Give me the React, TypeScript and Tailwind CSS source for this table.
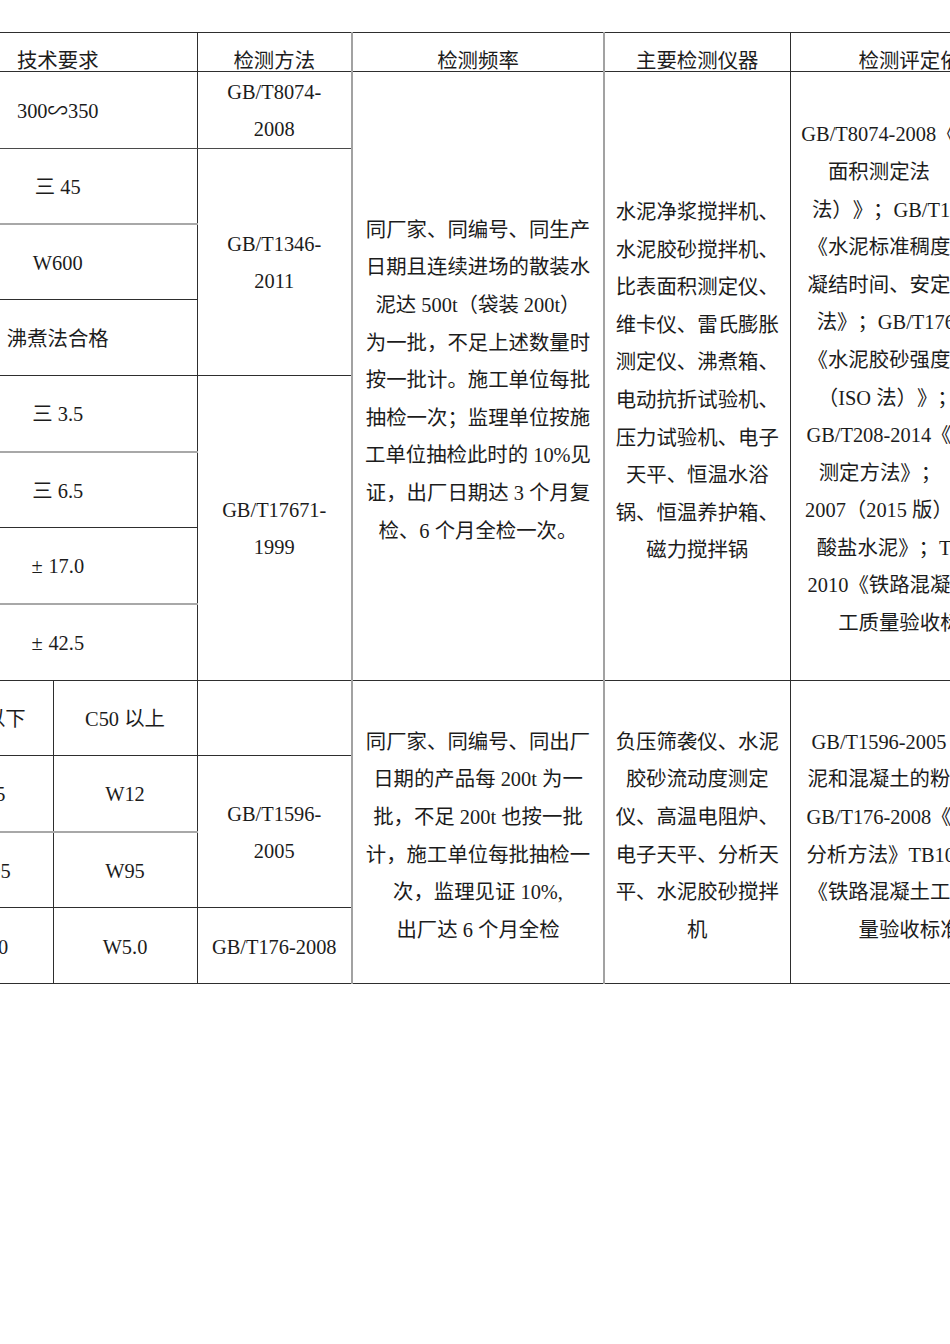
import React from 'react';

// 水泥 / 粉煤灰 检测项目表（页面左右被裁切）

const upperFreq = [
  '同厂家、同编号、同生产',
  '日期且连续进场的散装水',
  '泥达 500t（袋装 200t）',
  '为一批，不足上述数量时',
  '按一批计。施工单位每批',
  '抽检一次；监理单位按施',
  '工单位抽检此时的 10%见',
  '证，出厂日期达 3 个月复',
  '检、6 个月全检一次。',
];

const upperInst = [
  '水泥净浆搅拌机、',
  '水泥胶砂搅拌机、',
  '比表面积测定仪、',
  '维卡仪、雷氏膨胀',
  '测定仪、沸煮箱、',
  '电动抗折试验机、',
  '压力试验机、电子',
  '天平、恒温水浴',
  '锅、恒温养护箱、',
  '磁力搅拌锅',
];

const upperStd: React.ReactNode[] = [
  'GB/T8074-2008《水泥比表',
  '面积测定法　（勃氏',
  '法）》；GB/T1346-2011',
  '《水泥标准稠度用水量、',
  '凝结时间、安定性检验方',
  '法》；GB/T17671-1999',
  '《水泥胶砂强度检验方法',
  <>（ISO 法）》；<span className="inline-block w-[64px]" /></>,
  'GB/T208-2014《水泥密度',
  <>测定方法》；<span className="inline-block w-[14px]" />GB175-</>,
  '2007（2015 版）《通用硅',
  '酸盐水泥》；TB10424-',
  '2010《铁路混凝土工程施',
  '工质量验收标准》',
];

const lowerFreq = [
  '同厂家、同编号、同出厂',
  '日期的产品每 200t 为一',
  '批，不足 200t 也按一批',
  '计，施工单位每批抽检一',
  '次，监理见证 10%,',
  '出厂达 6 个月全检',
];

const lowerInst = [
  '负压筛袭仪、水泥',
  '胶砂流动度测定',
  '仪、高温电阻炉、',
  '电子天平、分析天',
  '平、水泥胶砂搅拌',
  '机',
];

const lowerStd = [
  'GB/T1596-2005《用于水',
  '泥和混凝土的粉煤灰》；',
  'GB/T176-2008《水泥化学',
  '分析方法》TB10424-2010',
  '《铁路混凝土工程施工质',
  '量验收标准》',
];

function Lines({ lines, className = '' }: { lines: React.ReactNode[]; className?: string }) {
  return (
    <div className={`flex flex-col items-center leading-[37.6px] ${className}`}>
      {lines.map((l, i) => (
        <span key={i} className="whitespace-pre">{l}</span>
      ))}
    </div>
  );
}

const R_DARK = 'border-r border-r-[#2e2e2e]';
const R_GRAY = 'border-r-2 border-r-[#a2a2a2]';
const B_DARK = 'border-b border-b-[#2e2e2e]';
const B_GRAY = 'border-b-2 border-b-[#a8a8a8]';

function Single({ text, className = '', span = 1 }: { text: React.ReactNode; className?: string; span?: number }) {
  return (
    <td colSpan={span} className={`p-0 align-middle ${className}`}>
      <div className="flex justify-center pt-[3px] whitespace-pre">{text}</div>
    </td>
  );
}

// full-width ± like the original document font
const PM = () => <span className="inline-block w-[17px] text-left">±</span>;

export default function App() {
  return (
    <div className="w-[950px] h-[1344px] overflow-hidden bg-white">
      <table className="ml-[-81px] mt-[32px] w-[1130px] table-fixed border-collapse text-[20.4px] text-[#1c1c1c] [text-spacing-trim:space-all] font-['Liberation_Serif','Noto_Sans_CJK_SC',serif]">
        <colgroup>
          <col className="w-[134px]" />
          <col className="w-[144px]" />
          <col className="w-[155px]" />
          <col className="w-[252px]" />
          <col className="w-[186px]" />
          <col className="w-[259px]" />
        </colgroup>
        <tbody>
          {/* header */}
          <tr className="h-[39px]">
            {['技术要求', '检测方法', '检测频率', '主要检测仪器', '检测评定依据'].map((h, i) => (
              <td
                key={h}
                colSpan={i === 0 ? 2 : 1}
                className={`p-0 align-bottom border-t border-t-[#2e2e2e] ${B_DARK} ${
                  i === 0 || i === 3 ? R_DARK : i === 4 ? '' : R_GRAY
                }`}
              >
                <div className="flex justify-center leading-[20px]">{h}</div>
              </td>
            ))}
          </tr>

          {/* 水泥 */}
          <tr className="h-[77px]">
            <Single span={2} text="300∽350" className={`${R_DARK} border-b border-b-[#4a4a4a]`} />
            <td className={`p-0 align-middle ${R_GRAY} border-b border-b-[#4a4a4a]`}>
              <Lines lines={['GB/T8074-', '2008']} className="pt-[2px] leading-[37px]" />
            </td>
            <td rowSpan={8} className={`p-0 align-middle ${R_GRAY} ${B_DARK}`}>
              <Lines lines={upperFreq} className="pt-[10px]" />
            </td>
            <td rowSpan={8} className={`p-0 align-middle ${R_DARK} ${B_DARK}`}>
              <Lines lines={upperInst} className="pt-[12px]" />
            </td>
            <td rowSpan={8} className={`p-0 align-middle ${B_DARK}`}>
              <Lines lines={upperStd} className="pt-[7px]" />
            </td>
          </tr>
          <tr className="h-[75px]">
            <Single span={2} text="三 45" className={`${R_DARK} ${B_GRAY}`} />
            <td rowSpan={3} className={`p-0 align-middle ${R_GRAY} ${B_DARK}`}>
              <Lines lines={['GB/T1346-', '2011']} className="pt-[2px] leading-[37px]" />
            </td>
          </tr>
          <tr className="h-[76px]">
            <Single span={2} text="W600" className={`${R_DARK} ${B_DARK}`} />
          </tr>
          <tr className="h-[76px]">
            <Single span={2} text="沸煮法合格" className={`${R_DARK} ${B_DARK}`} />
          </tr>
          <tr className="h-[76px]">
            <Single span={2} text="三 3.5" className={`${R_DARK} ${B_GRAY}`} />
            <td rowSpan={4} className={`p-0 align-middle ${R_GRAY} ${B_DARK}`}>
              <Lines lines={['GB/T17671-', '1999']} className="pt-[2px] leading-[37px]" />
            </td>
          </tr>
          <tr className="h-[76px]">
            <Single span={2} text="三 6.5" className={`${R_DARK} ${B_DARK}`} />
          </tr>
          <tr className="h-[76px]">
            <Single span={2} text={<><PM />17.0</>} className={`${R_DARK} ${B_GRAY}`} />
          </tr>
          <tr className="h-[77px]">
            <Single span={2} text={<><PM />42.5</>} className={`${R_DARK} ${B_DARK}`} />
          </tr>

          {/* 粉煤灰 */}
          <tr className="h-[75px]">
            <Single text="C50 以下" className={`${R_DARK} ${B_DARK}`} />
            <Single text="C50 以上" className={`${R_DARK} ${B_DARK}`} />
            <td className={`p-0 ${R_GRAY} ${B_DARK}`} />
            <td rowSpan={4} className={`p-0 align-middle ${R_GRAY} ${B_DARK}`}>
              <Lines lines={lowerFreq} className="pt-[9px]" />
            </td>
            <td rowSpan={4} className={`p-0 align-middle ${R_DARK} ${B_DARK}`}>
              <Lines lines={lowerInst} className="pt-[9px]" />
            </td>
            <td rowSpan={4} className={`p-0 align-middle ${B_DARK}`}>
              <Lines lines={lowerStd} className="pt-[9px]" />
            </td>
          </tr>
          <tr className="h-[76px]">
            <Single text="W25" className={`${R_DARK} ${B_GRAY}`} />
            <Single text="W12" className={`${R_DARK} ${B_GRAY}`} />
            <td rowSpan={2} className={`p-0 align-middle ${R_GRAY} ${B_DARK}`}>
              <Lines lines={['GB/T1596-', '2005']} className="pt-[2px] leading-[37px]" />
            </td>
          </tr>
          <tr className="h-[76px]">
            <Single text="W105" className={`${R_DARK} ${B_DARK}`} />
            <Single text="W95" className={`${R_DARK} ${B_DARK}`} />
          </tr>
          <tr className="h-[76px]">
            <Single text="W8.0" className={`${R_DARK} ${B_DARK}`} />
            <Single text="W5.0" className={`${R_DARK} ${B_DARK}`} />
            <Single text="GB/T176-2008" className={`${R_GRAY} ${B_DARK}`} />
          </tr>
        </tbody>
      </table>
    </div>
  );
}
